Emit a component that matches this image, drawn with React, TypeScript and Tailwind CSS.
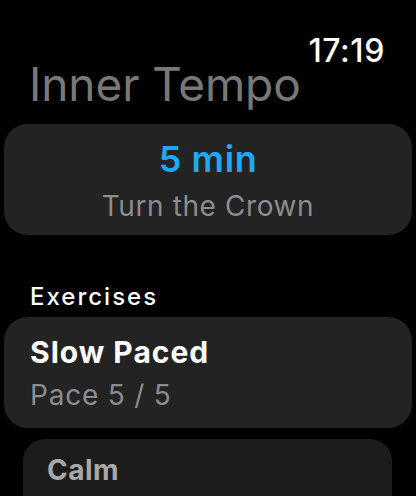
import React from "react";

export default function App() {
  return (
    <div
      className="w-[416px] h-[496px] overflow-hidden bg-black text-white pt-[35px]"
      style={{ fontFamily: "Inter, 'Noto Sans', sans-serif" }}
    >
      <div className="flex justify-end pr-[31px] h-[26px]">
        <span className="text-[32px] leading-[32px] font-medium tracking-[0.6px]">17:19</span>
      </div>
      <div className="pl-[29px] text-[46px] leading-[46px] text-[#787878] tracking-[-0.1px]">
        Inner Tempo
      </div>
      <div className="mx-[4px] mt-[17px] h-[111px] rounded-[24px] bg-[#232323] flex flex-col items-center pt-[17px]">
        <div className="text-[36px] leading-[36px] font-semibold text-[#1ea8f5] tracking-[0.6px]">5 min</div>
        <div className="mt-[15px] text-[28px] leading-[28px] text-[#8c8c90] tracking-[0.6px]">
          Turn the Crown
        </div>
      </div>
      <div className="pl-[30px] mt-[50px] text-[24px] leading-[24px] font-medium tracking-[2px]">
        Exercises
      </div>
      <div className="mx-[4px] mt-[8px] h-[111px] rounded-[24px] bg-[#232323] pl-[26px] pt-[20px]">
        <div className="text-[30px] leading-[30px] font-bold tracking-[1px]">Slow Paced</div>
        <div className="mt-[14px] text-[28px] leading-[28px] text-[#8c8c90] tracking-[0.8px]">Pace 5 / 5</div>
      </div>
      <div className="ml-[23px] w-[369px] mt-[11px] h-[120px] rounded-[22px] bg-[#1c1c1c] pl-[24px] pt-[17px]">
        <div className="text-[28px] leading-[28px] font-bold text-[#a8a8a8] tracking-[0.5px]">Calm</div>
      </div>
    </div>
  );
}
